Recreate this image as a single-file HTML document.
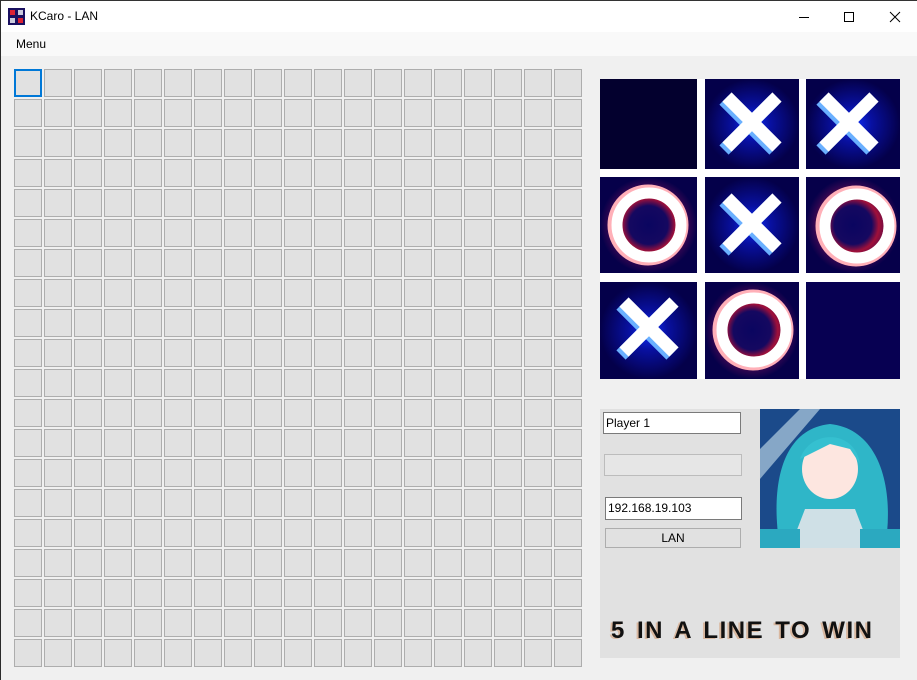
<!DOCTYPE html>
<html><head><style>
*{margin:0;padding:0;box-sizing:border-box}
body{width:917px;height:680px;background:#f0f0f0;font-family:"Liberation Sans",sans-serif;position:relative;overflow:hidden}
.lb{position:absolute;left:0;top:0;width:1px;height:680px;background:#2b2b2b;z-index:5}
.title{position:absolute;left:0;top:0;width:917px;height:32px;background:#fff;border-top:1px solid #333}
.title span{position:absolute;left:30px;top:8px;font-size:12px;color:#000}
.menu{position:absolute;left:0;top:32px;width:917px;height:24px;background:#f9f9f9}
.menu span{position:absolute;left:16px;top:5px;font-size:12px}
.grid{position:absolute;left:14px;top:69px;display:grid;grid-template-columns:repeat(19,28px);grid-auto-rows:28px;gap:2px}
.grid div{background:#e1e1e1;border:1px solid #adadad}
.grid div.sel{border:2px solid #0078d7}
.panel{position:absolute;left:600px;top:409px;width:300px;height:249px;background:#e1e1e1}
.inp{position:absolute;background:#fff;border:1px solid #7a7a7a;font-size:12px;padding:3px 0 0 2px}
</style></head><body>
<div class="lb"></div>
<div class="title">
<svg style="position:absolute;left:8px;top:7px" width="17" height="17"><rect width="17" height="17" fill="#1a1060"/><rect x="2" y="2" width="5" height="5" fill="#d23"/><rect x="10" y="2" width="5" height="5" fill="#ccd"/><rect x="2" y="10" width="5" height="5" fill="#ccd"/><rect x="10" y="10" width="5" height="5" fill="#d23"/></svg>
<span>KCaro - LAN</span>
<svg style="position:absolute;left:780px;top:0" width="137" height="32" fill="none" stroke="#000" stroke-width="1"><line x1="19" y1="16.5" x2="29" y2="16.5"/><rect x="64.5" y="11.5" width="9" height="9"/><path d="M110 11l10 10M120 11l-10 10"/></svg>
</div>
<div class="menu"><span>Menu</span></div>
<div class="grid" id="g"></div>
<svg style="position:absolute;left:600px;top:79px" width="300" height="300">
<defs>
<radialGradient id="bx"><stop offset="0" stop-color="#1030ff"/><stop offset=".4" stop-color="#0810a0"/><stop offset="1" stop-color="#04004a"/></radialGradient>
<radialGradient id="ro"><stop offset="0" stop-color="#0a0560"/><stop offset=".4" stop-color="#150860"/><stop offset=".55" stop-color="#a0103a"/><stop offset=".85" stop-color="#2a0550"/><stop offset="1" stop-color="#06004a"/></radialGradient>
<g id="X"><path d="M22 18L72 68M72 18L22 68" stroke="#6ab0ff" stroke-width="13" transform="translate(-3,3)"/><path d="M22 18L72 68M72 18L22 68" stroke="#fff" stroke-width="13"/></g>
<g id="O"><circle cx="48" cy="48" r="34" fill="none" stroke="#ffb0b8" stroke-width="13"/><circle cx="49" cy="48" r="32" fill="none" stroke="#fff" stroke-width="11"/></g>
</defs>
<rect width="300" height="300" fill="#fff"/>
<rect x="0" y="0" width="97" height="90" fill="#03002e"/>
<rect x="105" y="0" width="94" height="90" fill="url(#bx)"/><use href="#X" x="105" y="0"/>
<rect x="206" y="0" width="94" height="90" fill="url(#bx)"/><use href="#X" x="202" y="0"/>
<rect x="0" y="98" width="97" height="96" fill="url(#ro)"/><use href="#O" x="0" y="98"/>
<rect x="105" y="98" width="94" height="96" fill="url(#bx)"/><use href="#X" x="105" y="101"/>
<rect x="206" y="98" width="94" height="96" fill="url(#ro)"/><use href="#O" x="208" y="99"/>
<rect x="0" y="203" width="97" height="97" fill="url(#bx)"/><use href="#X" x="2" y="205"/>
<rect x="105" y="203" width="94" height="97" fill="url(#ro)"/><use href="#O" x="105" y="203"/>
<rect x="206" y="203" width="94" height="97" fill="#070052"/>
</svg>
<div class="panel">
<div class="inp" style="left:3px;top:3px;width:138px;height:22px">Player 1</div>
<div style="position:absolute;left:4px;top:45px;width:138px;height:22px;border:1px solid #bcbcbc;background:#e6e6e6"></div>
<div class="inp" style="left:5px;top:88px;width:137px;height:23px">192.168.19.103</div>
<div style="position:absolute;left:5px;top:119px;width:136px;height:20px;border:1px solid #adadad;background:#e1e1e1;font-size:12px;text-align:center;line-height:18px">LAN</div>
<svg style="position:absolute;left:160px;top:0" width="140" height="139">
<rect width="140" height="139" fill="#1b4a8a"/>
<path d="M0 40L40 0H60L0 70z" fill="#cfe6f0" opacity=".6"/>
<path d="M20 139C10 80 20 20 70 15C120 20 135 80 125 139z" fill="#2fb6c8"/>
<ellipse cx="70" cy="60" rx="28" ry="30" fill="#fde6e0"/>
<path d="M40 50C50 20 95 20 100 55L90 40L70 35L50 45z" fill="#35c0d0"/>
<path d="M45 100L95 100L110 139H30z" fill="#cfe0e6"/>
<rect x="0" y="120" width="40" height="19" fill="#2ba9c0"/><rect x="100" y="120" width="40" height="19" fill="#2ba9c0"/>
</svg>
<div style="position:absolute;left:11px;top:208px;font-size:24px;font-weight:bold;letter-spacing:1.5px;word-spacing:3px;color:#111;text-shadow:-2px 1px 0 #d9b8a0;white-space:nowrap">5 IN A LINE TO WIN</div>
</div>
<script>
var g=document.getElementById('g');for(var i=0;i<380;i++){var d=document.createElement('div');if(i==0)d.className='sel';g.appendChild(d);}
</script>
</body></html>
